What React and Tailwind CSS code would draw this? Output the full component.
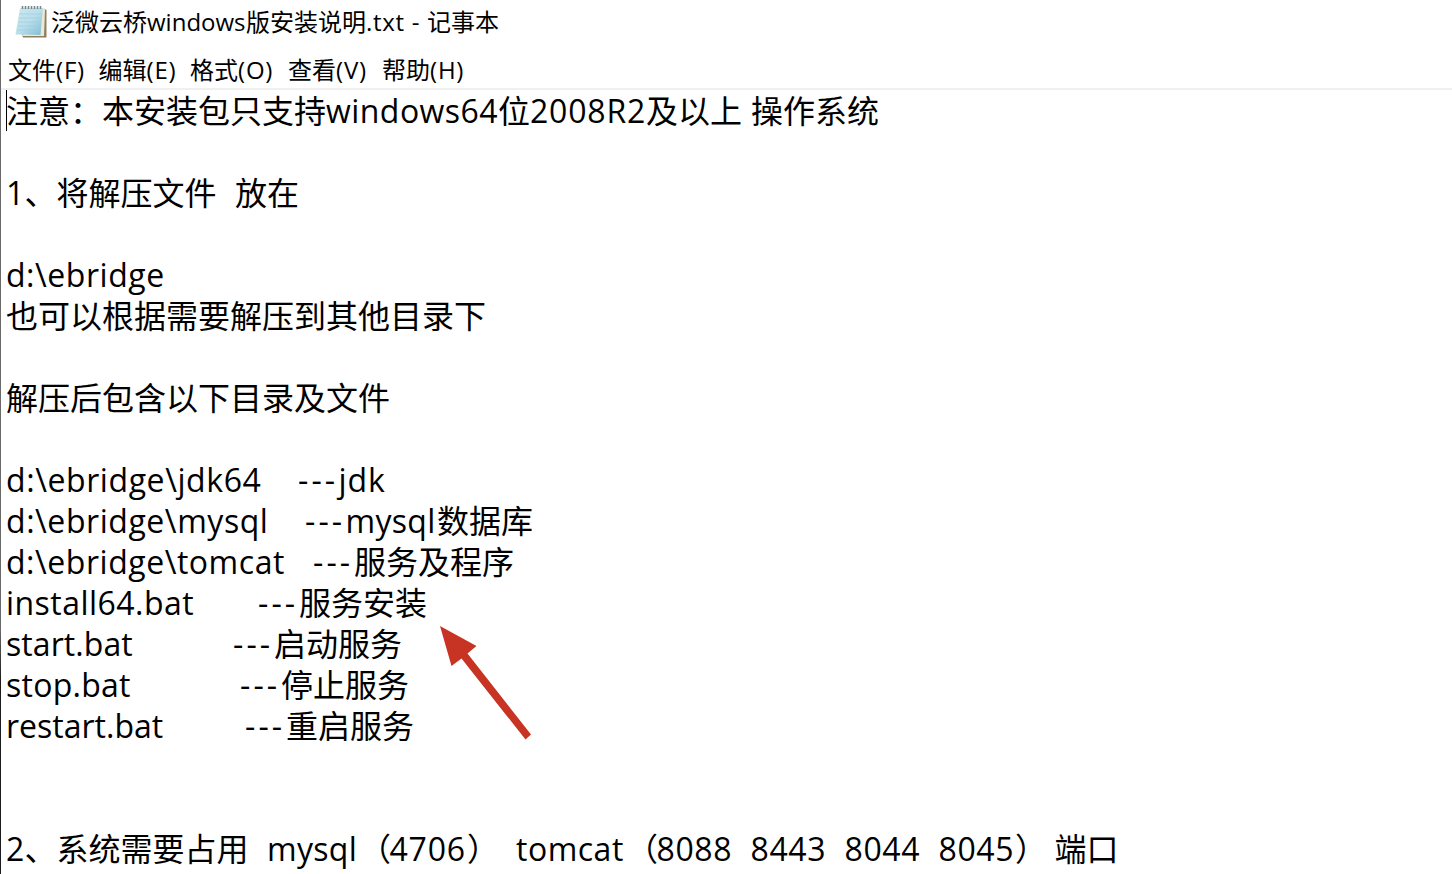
import React from 'react';

const menus = [
  { label: '文件', hotkey: '(F)', width: 'w-[90.5px]' },
  { label: '编辑', hotkey: '(E)', width: 'w-[91.5px]' },
  { label: '格式', hotkey: '(O)', width: 'w-[98px]' },
  { label: '查看', hotkey: '(V)', width: 'w-[94px]' },
  { label: '帮助', hotkey: '(H)', width: 'w-[90px]' },
];

// each line is a list of runs: [text, classes]
const lines = [
  [
    ['注意：本安装包只支持', 'w-[320px]'],
    ['windows64', 'w-[172px] tracking-[0.45px]'],
    ['位', 'w-[32px]'],
    ['2008R2', 'w-[116px] tracking-[0.8px]'],
    ['及以上 ', 'w-[105px]'],
    ['操作系统', 'w-[128px]'],
  ],
  [],
  [
    ['1', 'w-[18.6px]'],
    ['、将解压文件  ', 'w-[210.4px]'],
    ['放在', 'w-[64px]'],
  ],
  [],
  [['d:\\ebridge', 'tracking-[0.53px]']],
  [['也可以根据需要解压到其他目录下', '']],
  [],
  [['解压后包含以下目录及文件', '']],
  [],
  [
    ['d:\\ebridge\\jdk64    ', 'w-[292px] tracking-[0.58px]'],
    ['---', 'w-[40.5px] tracking-[3.1px]'],
    ['jdk', 'tracking-[0.9px]'],
  ],
  [
    ['d:\\ebridge\\mysql    ', 'w-[299px] tracking-[0.55px]'],
    ['---', 'w-[40.5px] tracking-[3.1px]'],
    ['mysql', 'w-[91.5px] tracking-[0.3px]'],
    ['数据库', ''],
  ],
  [
    ['d:\\ebridge\\tomcat   ', 'w-[307px] tracking-[0.53px]'],
    ['---', 'w-[41px] tracking-[3.1px]'],
    ['服务及程序', ''],
  ],
  [
    ['install64.bat       ', 'w-[252px] tracking-[0.46px]'],
    ['---', 'w-[41px] tracking-[3.1px]'],
    ['服务安装', ''],
  ],
  [
    ['start.bat           ', 'w-[227px] tracking-[0.07px]'],
    ['---', 'w-[41px] tracking-[3.1px]'],
    ['启动服务', ''],
  ],
  [
    ['stop.bat            ', 'w-[234px] tracking-[0.26px]'],
    ['---', 'w-[41px] tracking-[3.1px]'],
    ['停止服务', ''],
  ],
  [
    ['restart.bat         ', 'w-[239px]'],
    ['---', 'w-[41px] tracking-[3.1px]'],
    ['重启服务', ''],
  ],
  [],
  [],
  [
    ['2', 'w-[18.6px]'],
    ['、系统需要占用  ', 'w-[242.4px]'],
    ['mysql', 'w-[92px] tracking-[0.3px]'],
    ['（', 'w-[30.5px]'],
    ['4706', 'w-[77.5px] tracking-[0.8px]'],
    ['）  ', 'w-[49px]'],
    ['tomcat', 'w-[110px] tracking-[0.5px]'],
    ['（', 'w-[30.5px]'],
    ['8088  ', 'w-[94px] tracking-[0.6px]'],
    ['8443  ', 'w-[94px] tracking-[0.6px]'],
    ['8044  ', 'w-[94px] tracking-[0.6px]'],
    ['8045', 'w-[76.5px] tracking-[0.6px]'],
    ['） ', 'w-[39.5px]'],
    ['端口', 'w-[64px]'],
  ],
];

const NotepadIcon = () => (
  <svg width="34" height="36" viewBox="0 0 34 36" className="shrink-0">
    <defs>
      <linearGradient id="page" x1="0" y1="0" x2="1" y2="1">
        <stop offset="0" stopColor="#cfe8f0" />
        <stop offset="0.5" stopColor="#b9dfea" />
        <stop offset="1" stopColor="#7fbdd2" />
      </linearGradient>
    </defs>
    <path d="M30 3.5 L32.5 5 L32.5 32.5 L9 32.5 L8 30 Z" fill="#8f7f5c" />
    <path d="M29.5 3 L31 4.5 L30 31 L8 31 Z" fill="#eee8d8" />
    <path d="M6 3 L29 3 L26.5 30 L1.5 29.5 Z" fill="url(#page)" />
    <path d="M5.5 9h22M5 13h22M4.5 17h22M4 21h22M3.5 25h22" stroke="#9bcbdb" strokeWidth="0.6" />
    <path d="M8.5 1v3M11.5 1v3M14.5 1v3M17.5 1v3M20.5 1v3M23.5 1v3M26.5 1v3" stroke="#7d8589" strokeWidth="1.6" />
  </svg>
);

const TitleBar = () => (
  <div className="flex h-[46px] items-center pl-[13px]">
    <NotepadIcon />
    <h1 className="flex pl-[3px] text-2xl leading-[44px] h-[46px] whitespace-pre">
      <span className="w-24">泛微云桥</span>
      <span className="w-[99px]">windows</span>
      <span className="w-[120px]">版安装说明</span>
      <span className="w-[61px] tracking-[0.7px]">.txt - </span>
      <span>记事本</span>
    </h1>
  </div>
);

const MenuBar = () => (
  <div className="flex h-[44px] border-b-2 border-[#f0f0f0] pt-[3px] pl-[7px] text-2xl leading-[42px] whitespace-nowrap">
    {menus.map((menu) => (
      <div key={menu.label} className={`flex shrink-0 ${menu.width}`}>
        <span className="w-12">{menu.label}</span>
        <span className="tracking-[0.8px]">{menu.hotkey}</span>
      </div>
    ))}
  </div>
);

const App = () => {
  return (
    <div className="relative flex h-[874px] w-[1452px] overflow-hidden bg-white text-black font-['Open_Sans','Noto_Sans_CJK_SC',sans-serif]">
      {/* Window edge */}
      <div className="w-px shrink-0 bg-linear-to-b from-[#6a6a6a] from-72% to-[#1c1c1e] to-78%" />

      <div className="flex-1">
        <TitleBar />
        <MenuBar />
        <div className="relative pl-[5px]">
          {/* Caret */}
          <div className="absolute top-0 left-[5px] h-[41px] w-px bg-black" />
          {lines.map((runs, i) => (
            <div key={i} className="flex h-[41.02px] text-[32px] leading-[41.02px] whitespace-pre">
              {runs.map(([text, style], j) => (
                <span key={j} className={`shrink-0 ${style}`}>{text}</span>
              ))}
            </div>
          ))}
        </div>
      </div>

      {/* Arrow pointing at the install script */}
      <svg width="96" height="118" viewBox="0 0 96 118" className="absolute top-[624px] left-[438px]">
        <polygon points="2,2 38.5,22 29.5,29.5 93,110.5 87.5,115.5 23.5,34.5 13.5,42" fill="#c83424" />
      </svg>
    </div>
  );
};

export default App;
